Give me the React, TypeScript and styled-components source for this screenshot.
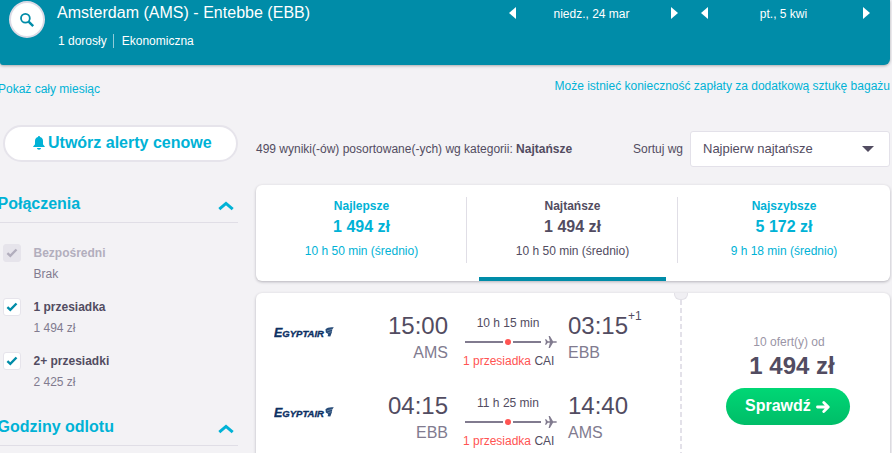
import React from 'react';
import styled, { createGlobalStyle } from 'styled-components';

const GlobalStyle = createGlobalStyle`
  * { box-sizing: border-box; }

  body {
    margin: 0;
    background: #f3f2f5;
    color: #524c61;
    font: 12px/16px 'Liberation Sans', Arial, sans-serif;
    overflow: hidden;
  }
`;

const Page = styled.div`
  width: 892px;
  height: 453px;
  overflow: hidden;
`;

const Header = styled.header`
  display: flex;
  width: 890px;
  height: 65px;
  padding-left: 9px;
  background: #008ca8;
  border-radius: 0 0 6px 3px;
  box-shadow: 0 1px 3px rgba(0, 0, 0, 0.3);
  color: #fff;
`;

const SearchButton = styled.button`
  display: flex;
  align-items: center;
  justify-content: center;
  width: 36px;
  height: 37px;
  margin: 1px 12px 0 0;
  padding: 0;
  background: #fff;
  border: 2px solid #dddbe6;
  border-radius: 50%;
`;

const Trip = styled.div`
  width: 451px;
`;

const Route = styled.h1`
  margin: 1px 0 0;
  font-size: 16px;
  font-weight: 400;
  line-height: 24px;
  letter-spacing: 0.02px;
`;

const TripInfo = styled.div`
  display: flex;
  margin-top: 8px;
`;

const Passengers = styled.span`
  height: 14px;
  margin: 1px 8px 0 0;
  padding: 0 6px 0 1px;
  border-right: 1px solid #8fcbd8;
  line-height: 14px;
`;

const DateNav = styled.div`
  display: flex;
  align-items: center;
  justify-content: space-between;
  width: 169px;
  height: 16px;
  margin: 6px 23px 0 0;

  &:last-child { margin-right: 0; }
`;

const DateLabel = styled.span`
  padding-right: 4px;
`;

const Triangle = styled.span<{ $dir: 'left' | 'right' }>`
  margin-bottom: 2px;
  border: 6px solid transparent;
  border-width: 6px ${({ $dir }) => ($dir === 'left' ? '7px 6px 0' : '0 6px 7px')};
  border-${({ $dir }) => ($dir === 'left' ? 'right' : 'left')}-color: #fff;
`;

const Dates = styled.nav`
  display: flex;
  flex: none;
  padding-left: 1px;
`;

const LinkRow = styled.div`
  display: flex;
  justify-content: space-between;
  width: 891px;
  height: 60px;
  padding: 13px 1px 0 0;
  color: #00b2d6;
`;

const MonthLink = styled.a`
  margin: 3px 0 0 -2px;
`;

const Columns = styled.div`
  display: flex;
  gap: 18px;
`;

const Sidebar = styled.aside`
  width: 238px;
`;

const AlertButton = styled.button`
  display: flex;
  align-items: center;
  gap: 3px;
  width: 235px;
  height: 37px;
  margin-left: 3px;
  padding: 0 0 2px 28px;
  background: #fff;
  border: 2px solid #e6e4eb;
  border-radius: 19px;
  color: #00b2d6;
  font: bold 16px 'Liberation Sans', Arial, sans-serif;
`;

const SectionTitle = styled.h2<{ $top: number }>`
  display: flex;
  justify-content: space-between;
  align-items: center;
  height: 31px;
  margin: ${({ $top }) => $top}px 0 0;
  padding: 0 4px 7px 0;
  border-bottom: 1px solid #e0dee6;
  color: #00b2d6;
  font-size: 16px;
  line-height: 24px;

  span { margin-left: -2.5px; }
  svg { margin-top: 4px; }
`;

const Stops = styled.div`
  padding: 21px 0 0 3px;
`;

const Stop = styled.label<{ $disabled?: boolean }>`
  display: flex;
  gap: 12px;
  height: 54px;
  color: ${({ $disabled }) => ($disabled ? '#b2aebd' : '#524c61')};
`;

const CheckBox = styled.span<{ $disabled?: boolean }>`
  display: flex;
  align-items: center;
  justify-content: center;
  width: 18px;
  height: 18px;
  background: ${({ $disabled }) => ($disabled ? '#e6e4eb' : '#fff')};
  border: 1px solid #e6e4eb;
  border-radius: 3px;
  color: ${({ $disabled }) => ($disabled ? '#b2aebd' : '#008ca8')};
`;

const StopText = styled.div`
  padding: 1px 0 0 0.5px;
`;

const StopPrice = styled.div`
  margin-top: 5px;
  color: #817b8f;
`;

const Results = styled.main`
  width: 634px;
`;

const SortRow = styled.div`
  display: flex;
  align-items: center;
  height: 36px;
  margin: 6px 0 18px;
`;

const SortLabel = styled.span`
  margin: 0 7px 0 auto;
`;

const SortSelect = styled.div`
  display: flex;
  align-items: center;
  justify-content: space-between;
  width: 200px;
  height: 36px;
  padding: 0 15px 0 12px;
  background: #fff;
  border: 1px solid #e3e1e9;
  border-radius: 3px;
  font-size: 13px;
`;

const Caret = styled.span`
  border: 6px solid transparent;
  border-top-color: #524c61;
  border-bottom-width: 0;
`;

const Card = styled.section`
  display: flex;
  background: #fff;
  border-radius: 6px;
  box-shadow: 0 1px 3px rgba(37, 32, 51, 0.3);
`;

const Tabs = styled(Card)`
  display: grid;
  grid-template-columns: 211px 211px 212px;
  height: 96px;
  margin-bottom: 12px;
`;

const Tab = styled.div<{ $active?: boolean }>`
  display: flex;
  flex-direction: column;
  padding-top: 12px;
  text-align: center;
  color: ${({ $active }) => ($active ? '#524c61' : '#00b2d6')};

  &::after {
    content: '';
    height: 4px;
    margin: auto 12px 0;
    background: ${({ $active }) => ($active ? '#008ca8' : 'transparent')};
  }
`;

const TabBody = styled.div<{ $divider: boolean }>`
  height: 66px;
  padding: 1px 0 0 1px;
  border-right: 1px solid ${({ $divider }) => ($divider ? '#e0dee6' : 'transparent')};
`;

const TabPrice = styled.div`
  margin: 1px 0 4px;
  font-size: 16px;
  font-weight: 700;
  line-height: 24px;
`;

const Ticket = styled(Card)`
  height: 180px;
`;

const Legs = styled.div`
  width: 424px;
`;

const Leg = styled.div`
  display: flex;
  height: 80px;
  padding: 19px 0 0 18px;
`;

const Airline = styled.div`
  width: 60px;
  margin-top: 14px;
`;

const Point = styled.div<{ $end?: boolean }>`
  width: ${({ $end }) => ($end ? 90 : 114)}px;
  text-align: ${({ $end }) => ($end ? 'left' : 'right')};
`;

const Time = styled.div`
  display: flex;
  font-size: 24px;
  line-height: 28px;
`;

const Clock = styled.span<{ $end?: boolean }>`
  flex: ${({ $end }) => ($end ? 'none' : 1)};
`;

const NextDay = styled.sup`
  margin: -4px 0 0;
  font-size: 12px;
  line-height: 16px;
`;

const Airport = styled.div`
  margin-top: 3px;
  color: #817b8f;
  font-size: 16px;
  line-height: 20px;
`;

const Path = styled.div`
  width: 120px;
  padding: 3px 0 0 15px;
  white-space: nowrap;
`;

const Duration = styled.div`
  width: 90px;
  text-align: center;
`;

const StopLine = styled.div`
  display: flex;
  align-items: center;
  height: 12px;
  margin: 5px 0;
  padding-left: 2px;

  svg { margin-left: 4px; }
`;

const Line = styled.span<{ $width: number }>`
  width: ${({ $width }) => $width}px;
  height: 2px;
  background: #817b8f;
`;

const StopDot = styled.span`
  width: 6px;
  height: 6px;
  margin: 0 2px;
  background: #ff5452;
  border-radius: 50%;
`;

const StopCount = styled.span`
  color: #ff5452;
`;

const Tear = styled.div`
  display: flex;
  flex-direction: column;
  align-items: center;
  width: 2px;

  &::before {
    content: '';
    flex: none;
    width: 12px;
    height: 6px;
    background: #f0eff3;
    border: 1px solid #e2e0e6;
    border-top: 0;
    border-radius: 0 0 6px 6px;
  }

  &::after {
    content: '';
    flex: 1;
    width: 2px;
    background: repeating-linear-gradient(#e3e1e9 0 5.5px, transparent 5.5px 8px);
  }
`;

const Offer = styled.div`
  display: flex;
  flex: 1;
  flex-direction: column;
  align-items: center;
  padding: 41px 0 0 4px;
`;

const OfferCount = styled.div`
  padding-left: 2px;
  color: #9a95a6;
`;

const OfferPrice = styled.div`
  padding-left: 8px;
  margin: 1px 0 8px;
  font-size: 24px;
  font-weight: 700;
  line-height: 29px;
`;

const CheckButton = styled.button`
  display: flex;
  align-items: center;
  gap: 5px;
  width: 124px;
  height: 37px;
  padding: 0 0 2px 19px;
  background: linear-gradient(#00d775, #00bd68);
  border: 0;
  border-radius: 19px;
  color: #fff;
  font: bold 16px 'Liberation Sans', Arial, sans-serif;

  svg { margin-top: 2px; }
`;

const SearchIcon = () => (
  <svg width="16" height="16" viewBox="0 0 16 16" fill="none" stroke="#008ca8">
    <circle cx="6.4" cy="6.2" r="4.4" strokeWidth="1.8" />
    <path d="M9.6 9.6l4.6 4.6" strokeWidth="2.4" />
  </svg>
);

const BellIcon = () => (
  <svg width="12" height="14" viewBox="0 0 12 14" fill="currentColor">
    <path d="M6 0c.7 0 1 .5 1 1.1C9 1.6 10 3 10 5v3.300c0 .8 1.900 1.700 1.900 2.700H.1c0-1 1.900-1.900 1.900-2.700V5c0-2 1-3.400 3-3.900C5 .5 5.300 0 6 0zM4 12h4c0 1-.9 1.700-2 1.700S4 13 4 12z" />
  </svg>
);

const ChevronUp = () => (
  <svg width="16" height="10" viewBox="0 0 16 10" fill="none" stroke="currentColor" strokeWidth="3">
    <path d="M1.300 8.200L8 2.400l6.700 5.800" />
  </svg>
);

const CheckIcon = () => (
  <svg width="12" height="10" viewBox="0 0 12 10" fill="none" stroke="currentColor" strokeWidth="2.4">
    <path d="M1.400 5.200l2.900 2.600 6.200-6.300" />
  </svg>
);

const PlaneIcon = () => (
  <svg width="12" height="12" viewBox="0 0 12 12" fill="#817b8f">
    <path d="M0 3.300h1.200L2.800 5.200h2.100L3.600 0h1.300l3.100 5.200h2.500c.8 0 1.500.3 1.500.8s-.7.8-1.500.8H8L4.900 12H3.600l1.300-5.200H2.800L1.200 8.700H0L.9 6z" />
  </svg>
);

const ArrowIcon = () => (
  <svg width="14" height="12" viewBox="0 0 15 13" fill="none" stroke="#fff" strokeWidth="3" strokeLinecap="round" strokeLinejoin="round">
    <path d="M1.500 6.500h11.500M8.300 1.700l4.900 4.800-4.900 4.800" />
  </svg>
);

const EgyptairLogo = () => (
  <svg width="60" height="13" viewBox="0 0 60 13" fill="#0b2f63">
    <text
      y="10.700"
      fontFamily="Liberation Sans, Arial, sans-serif"
      fontWeight="700"
      fontStyle="italic"
      fontSize="9.5"
      stroke="#0b2f63"
      strokeWidth="0.35"
      textLength="50"
      lengthAdjust="spacingAndGlyphs"
    >
      <tspan fontSize="12.5">E</tspan>GYPTAIR
    </text>
    <path d="M51.500 3.300Q53.500 .8 59.800 1.300L58.200 3.600 58 6 56.300 10.600 53.600 10.200 54.200 8 51.800 6.400z" fill="#264a77" />
    <path d="M53 4.800l5-1.500M54 6.800l3.800-1.300" stroke="#9fb4ca" strokeWidth=".5" />
  </svg>
);

const stops = [
  { label: 'Bezpośredni', price: 'Brak', disabled: true },
  { label: '1 przesiadka', price: '1 494 zł' },
  { label: '2+ przesiadki', price: '2 425 zł' },
];

const tabs = [
  { label: 'Najlepsze', price: '1 494 zł', time: '10 h 50 min (średnio)' },
  { label: 'Najtańsze', price: '1 494 zł', time: '10 h 50 min (średnio)', active: true },
  { label: 'Najszybsze', price: '5 172 zł', time: '9 h 18 min (średnio)' },
];

const legs = [
  { from: 'AMS', to: 'EBB', departure: '15:00', arrival: '03:15', duration: '10 h 15 min', nextDay: '+1' },
  { from: 'EBB', to: 'AMS', departure: '04:15', arrival: '14:40', duration: '11 h 25 min' },
];

const App: React.FC = () => (
  <Page>
    <GlobalStyle />
    <Header>
      <SearchButton>
        <SearchIcon />
      </SearchButton>
      <Trip>
        <Route>Amsterdam (AMS) - Entebbe (EBB)</Route>
        <TripInfo>
          <Passengers>1 dorosły</Passengers>
          <span>Ekonomiczna</span>
        </TripInfo>
      </Trip>
      <Dates>
        {['niedz., 24 mar', 'pt., 5 kwi'].map((date) => (
          <DateNav key={date}>
            <Triangle $dir="left" />
            <DateLabel>{date}</DateLabel>
            <Triangle $dir="right" />
          </DateNav>
        ))}
      </Dates>
    </Header>

    <LinkRow>
      <MonthLink>Pokaż cały miesiąc</MonthLink>
      <a>Może istnieć konieczność zapłaty za dodatkową sztukę bagażu</a>
    </LinkRow>

    <Columns>
      <Sidebar>
        <AlertButton>
          <BellIcon />
          Utwórz alerty cenowe
        </AlertButton>

        <SectionTitle $top={30}>
          <span>Połączenia</span>
          <ChevronUp />
        </SectionTitle>
        <Stops>
          {stops.map((stop) => (
            <Stop key={stop.label} $disabled={stop.disabled}>
              <CheckBox $disabled={stop.disabled}>
                <CheckIcon />
              </CheckBox>
              <StopText>
                <b>{stop.label}</b>
                <StopPrice>{stop.price}</StopPrice>
              </StopText>
            </Stop>
          ))}
        </Stops>

        <SectionTitle $top={9}>
          <span>Godziny odlotu</span>
          <ChevronUp />
        </SectionTitle>
      </Sidebar>

      <Results>
        <SortRow>
          <span>
            499 wyniki(-ów) posortowane(-ych) wg kategorii: <b>Najtańsze</b>
          </span>
          <SortLabel>Sortuj wg</SortLabel>
          <SortSelect>
            Najpierw najtańsze
            <Caret />
          </SortSelect>
        </SortRow>

        <Tabs>
          {tabs.map((tab, i) => (
            <Tab key={tab.label} $active={tab.active}>
              <TabBody $divider={i < tabs.length - 1}>
                <b>{tab.label}</b>
                <TabPrice>{tab.price}</TabPrice>
                <div>{tab.time}</div>
              </TabBody>
            </Tab>
          ))}
        </Tabs>

        <Ticket>
          <Legs>
            {legs.map((leg) => (
              <Leg key={leg.departure}>
                <Airline>
                  <EgyptairLogo />
                </Airline>
                <Point>
                  <Time>
                    <Clock>{leg.departure}</Clock>
                  </Time>
                  <Airport>{leg.from}</Airport>
                </Point>
                <Path>
                  <Duration>{leg.duration}</Duration>
                  <StopLine>
                    <Line $width={38} />
                    <StopDot />
                    <Line $width={28} />
                    <PlaneIcon />
                  </StopLine>
                  <div>
                    <StopCount>1 przesiadka</StopCount> CAI
                  </div>
                </Path>
                <Point $end>
                  <Time>
                    <Clock $end>{leg.arrival}</Clock>
                    {leg.nextDay && <NextDay>{leg.nextDay}</NextDay>}
                  </Time>
                  <Airport>{leg.to}</Airport>
                </Point>
              </Leg>
            ))}
          </Legs>
          <Tear />
          <Offer>
            <OfferCount>10 ofert(y) od</OfferCount>
            <OfferPrice>1 494 zł</OfferPrice>
            <CheckButton>
              Sprawdź
              <ArrowIcon />
            </CheckButton>
          </Offer>
        </Ticket>
      </Results>
    </Columns>
  </Page>
);

export default App;
